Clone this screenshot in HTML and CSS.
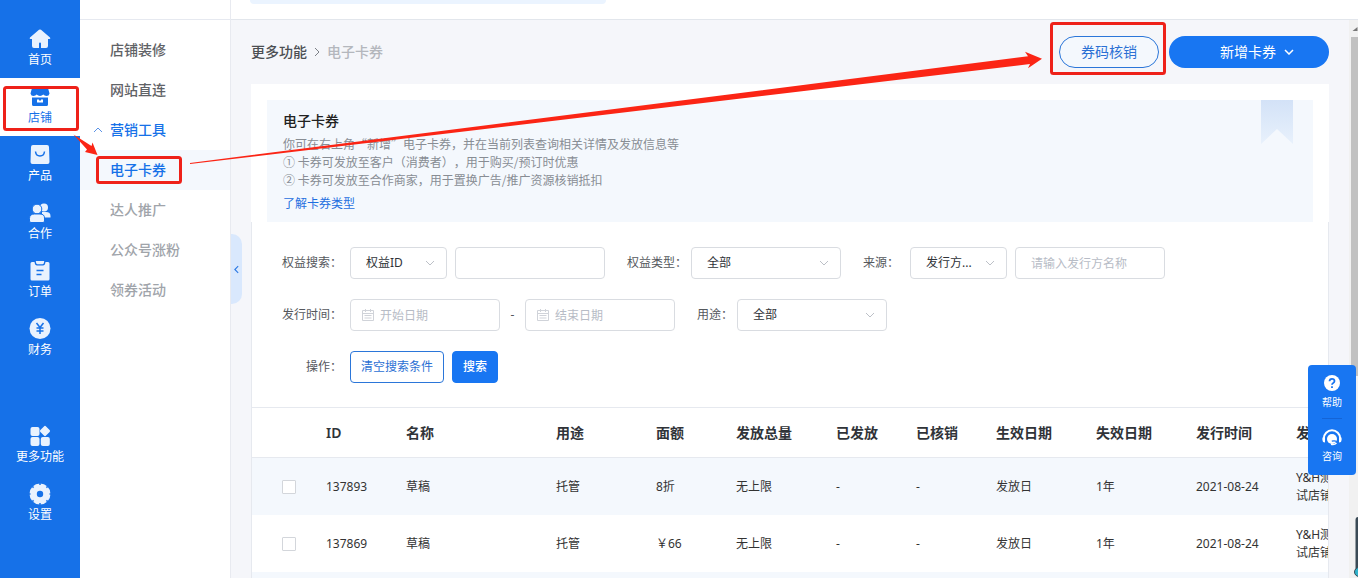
FILE: index.html
```html
<!DOCTYPE html>
<html lang="zh-CN">
<head>
<meta charset="utf-8">
<title>电子卡券</title>
<link rel="stylesheet" href="styles.css">
</head>
<body>
<div class="app">
  <nav class="rail">
    <a class="rail-item" href="#">
      <svg class="rail-icon" viewBox="0 0 22 22"><path d="M10 1.8Q11 1 12 1.8L21 9.6Q22 11 20.5 11H19V18Q19 20 17 20H12V15.5Q12 14.5 11 14.5T10 15.5V20H5Q3 20 3 18V11H1.5Q0 11 1 9.6Z"/></svg>
      <span>首页</span>
    </a>
    <a class="rail-item active" href="#">
      <svg class="rail-icon" viewBox="0 0 22 22"><path d="M3 2H19L20.500 7.500Q20 10 17.500 10 15.500 10 14.300 8.600 13 10 11 10T7.700 8.600Q6.500 10 4.500 10 2 10 1.500 7.500Z"/><path fill-rule="evenodd" d="M3 11.500H19V18.500Q19 20 17.500 20H4.500Q3 20 3 18.500ZM8 13.500V16.500H14V13.500Z"/><path d="M10 13H12V14.500H10Z"/></svg>
      <span>店铺</span>
    </a>
    <a class="rail-item" href="#">
      <svg class="rail-icon" viewBox="0 0 22 22"><path d="M4 1H18Q20 1 20 3L20.500 18Q20.500 20 18.500 20H3.500Q1.500 20 1.500 18L2 3Q2 1 4 1Z"/><path class="cut" d="M6.500 7.500Q7 12 11 12T15.500 7.500"/></svg>
      <span>产品</span>
    </a>
    <a class="rail-item" href="#">
      <svg class="rail-icon" viewBox="0 0 22 22"><circle cx="15" cy="5.500" r="4"/><path d="M13 10H17Q21.500 10 21.500 14V15.500H13Z"/><g class="front"><circle cx="8" cy="7" r="4.800"/><path d="M5.500 12H11Q15.500 12 15.500 16V19Q15.500 20.500 14 20.500H2Q.5 20.500 .5 19V16.500Q.5 12 5.500 12Z"/></g></svg>
      <span>合作</span>
    </a>
    <a class="rail-item" href="#">
      <svg class="rail-icon" viewBox="0 0 22 22"><path d="M3 2H5.500Q6 5.500 8 5.500H14Q16 5.500 16.500 2H19Q20.500 2 20.500 3.500V19Q20.500 20.500 19 20.500H3Q1.500 20.500 1.500 19V3.500Q1.500 2 3 2Z"/><path d="M6.800 1H15.200Q15 4.300 13.500 4.300H8.500Q7 4.300 6.800 1Z"/><path class="cut" d="M7.500 10.500H14.500M7.500 14.500H12.500"/></svg>
      <span>订单</span>
    </a>
    <a class="rail-item" href="#">
      <svg class="rail-icon" viewBox="0 0 22 22"><circle cx="11" cy="10.500" r="10.500"/><path class="cut" d="M7.500 5 11 9.500 14.500 5M11 9.500V16M7.500 10H14.500M7.500 13H14.500"/></svg>
      <span>财务</span>
    </a>
    <a class="rail-item secondary" href="#">
      <svg class="rail-icon" viewBox="0 0 22 22"><rect x="1.500" y="2" width="9" height="9" rx="2"/><rect x="1.500" y="12" width="9" height="9" rx="2"/><rect x="11.800" y="12" width="9" height="9" rx="2"/><rect x="12" y="2" width="8" height="8" rx="1.500" transform="rotate(45 16 6)"/></svg>
      <span>更多功能</span>
    </a>
    <a class="rail-item" href="#">
      <svg class="rail-icon" viewBox="0 0 22 22"><circle cx="11" cy="11" r="10.500"/><path class="cut" d="M11 0V2M11 20V22M0 11H1.500M20.500 11H22M3.200 3.200 4.600 4.600M17.400 17.400 18.800 18.800M3.200 18.800 4.600 17.400M17.400 4.600 18.800 3.200"/><circle class="hole" cx="11" cy="11" r="3.200"/></svg>
      <span>设置</span>
    </a>
  </nav>

  <aside class="submenu">
    <div class="submenu-top"></div>
    <a href="#">店铺装修</a>
    <a href="#">网站直连</a>
    <a class="open" href="#"><svg class="caret" viewBox="0 0 10 6"><path d="M1 5 5 1 9 5"/></svg>营销工具</a>
    <a class="current" href="#">电子卡券</a>
    <a class="sub" href="#">达人推广</a>
    <a class="sub" href="#">公众号涨粉</a>
    <a class="sub" href="#">领券活动</a>
  </aside>

  <div class="workspace">
    <button class="collapse" type="button" aria-label="收起菜单"><svg viewBox="0 0 6 10"><path d="M5 1 1 5 5 9"/></svg></button>
    <header class="topbar"><div class="topbar-search"></div></header>
    <div class="viewport">
      <main class="content">
        <div class="toolbar">
          <div class="crumbs">
            <a href="#">更多功能</a>
            <svg viewBox="0 0 6 10"><path d="M1 1 5 5 1 9"/></svg>
            <span>电子卡券</span>
          </div>
          <div class="actions">
            <button class="pill outline" type="button">券码核销</button>
            <button class="pill solid" type="button">新增卡券<svg viewBox="0 0 10 6"><path d="M1 1 5 5 9 1"/></svg></button>
          </div>
        </div>

        <section class="intro">
          <div class="intro-box">
            <h1>电子卡券</h1>
            <p>你可在右上角“新增”电子卡券，并在当前列表查询相关详情及发放信息等<br>① 卡券可发放至客户（消费者），用于购买/预订时优惠<br>② 卡券可发放至合作商家，用于置换广告/推广资源核销抵扣</p>
            <a href="#">了解卡券类型</a>
            <svg class="ribbon" viewBox="0 0 32 44"><defs><linearGradient id="fade" x2="0" y2="1"><stop stop-color="#d3e2f7"/><stop offset="1" stop-color="#e8f1fc"/></linearGradient></defs><path fill="url(#fade)" d="M0 0H32V44L16 29 0 44Z"/></svg>
          </div>
        </section>

        <section class="panel">
          <form class="filters">
            <div class="filter-row">
              <label class="lead" for="key">权益搜索：</label>
              <div class="group">
                <div class="pick short"><select id="key"><option>权益ID</option></select><svg viewBox="0 0 10 6"><path d="M1 1 5 5 9 1"/></svg></div>
                <input class="box" type="text" aria-label="权益搜索内容">
              </div>
              <div class="field">
                <label for="type">权益类型：</label>
                <div class="pick"><select id="type"><option>全部</option></select><svg viewBox="0 0 10 6"><path d="M1 1 5 5 9 1"/></svg></div>
              </div>
              <div class="field wide">
                <label for="source">来源：</label>
                <div class="group">
                  <div class="pick short"><select id="source"><option>发行方...</option></select><svg viewBox="0 0 10 6"><path d="M1 1 5 5 9 1"/></svg></div>
                  <input class="box" type="text" placeholder="请输入发行方名称" aria-label="发行方名称">
                </div>
              </div>
            </div>
            <div class="filter-row">
              <label class="lead" for="from">发行时间：</label>
              <div class="range">
                <div class="date"><svg viewBox="0 0 12 12"><path d="M.5 1.500H11.500V11.500H.5ZM.5 4.500H11.500M3.500 0V3M8.500 0V3M2.500 6.500H9.500M2.500 9H9.500"/></svg><input class="box" id="from" type="text" placeholder="开始日期"></div>
                <span>-</span>
                <div class="date"><svg viewBox="0 0 12 12"><path d="M.5 1.500H11.500V11.500H.5ZM.5 4.500H11.500M3.500 0V3M8.500 0V3M2.500 6.500H9.500M2.500 9H9.500"/></svg><input class="box" type="text" placeholder="结束日期" aria-label="结束日期"></div>
              </div>
              <div class="field">
                <label for="use">用途：</label>
                <div class="pick"><select id="use"><option>全部</option></select><svg viewBox="0 0 10 6"><path d="M1 1 5 5 9 1"/></svg></div>
              </div>
            </div>
            <div class="filter-row">
              <span class="lead">操作：</span>
              <div class="group">
                <button class="btn" type="reset">清空搜索条件</button>
                <button class="btn primary" type="button">搜索</button>
              </div>
            </div>
          </form>

          <table class="list">
            <colgroup><col class="w64"><col class="w80"><col class="w150"><col class="w100"><col class="w80"><col class="w100"><col class="w80"><col class="w80"><col class="w100"><col class="w100"><col class="w100"><col></colgroup>
            <thead>
              <tr><th></th><th>ID</th><th>名称</th><th>用途</th><th>面额</th><th>发放总量</th><th>已发放</th><th>已核销</th><th>生效日期</th><th>失效日期</th><th>发行时间</th><th>发行方</th></tr>
            </thead>
            <tbody>
              <tr><td class="tick"><input type="checkbox" aria-label="选择 137893"></td><td>137893</td><td>草稿</td><td>托管</td><td>8折</td><td>无上限</td><td>-</td><td>-</td><td>发放日</td><td>1年</td><td>2021-08-24</td><td class="issuer">Y&amp;H测试店铺</td></tr>
              <tr><td class="tick"><input type="checkbox" aria-label="选择 137869"></td><td>137869</td><td>草稿</td><td>托管</td><td>￥66</td><td>无上限</td><td>-</td><td>-</td><td>发放日</td><td>1年</td><td>2021-08-24</td><td class="issuer">Y&amp;H测试店铺</td></tr>
              <tr><td colspan="12"></td></tr>
            </tbody>
          </table>
        </section>
      </main>
      <div class="scrollbar"><svg viewBox="0 0 8 17"><path d="M8 7V11H3Z"/></svg><div class="thumb"></div></div>
    </div>
  </div>
</div>

<div class="float">
  <a href="#"><svg viewBox="0 0 20 18"><circle cx="10" cy="9" r="8" fill="#fff"/><path d="M7.500 7.300Q7.600 4.800 10 4.800T12.500 7Q12.500 8.200 11.200 9 10 9.700 10 10.800M10 12.300V14" fill="none" stroke="#1673f0" stroke-width="1.800"/></svg>帮助</a>
  <a href="#"><svg viewBox="0 0 20 18"><path d="M1.800 12V10.500A8.200 8.200 0 0 1 18.200 10.500V12" fill="none" stroke="#fff" stroke-width="2"/><path d="M.5 9.500H3V14.500Q.5 14.500 .5 12ZM19.500 9.500H17V14.500Q19.500 14.500 19.500 12Z" fill="#fff"/><circle cx="10" cy="11" r="5" fill="#fff"/><path d="M9.800 13.200Q12.800 12.500 14.800 13.500" fill="none" stroke="#1673f0" stroke-width="1.200"/><path d="M9 16.200Q12.500 17 14.500 15" fill="none" stroke="#fff" stroke-width="1.500"/></svg>咨询</a>
</div>
<svg class="dock" viewBox="0 0 4 61"><path d="M4 0Q1.500 0 1.500 3V53H4Z" fill="#3a4a55"/><circle cx="5" cy="55" r="4.500" fill="#2fb3cc" stroke="#3a4a55"/></svg>

<svg class="marks" width="1358" height="578" viewBox="0 0 1358 578">
  <g fill="none" stroke="#ee2119" stroke-width="3">
    <rect x="4.500" y="87.500" width="73" height="42" rx="2"/>
    <rect x="97.500" y="157.500" width="83" height="25" rx="2"/>
    <rect x="1051.500" y="23.500" width="113" height="50" rx="2"/>
  </g>
  <g fill="#fb2515">
    <path d="M73.500 134.500 91.500 146 92.500 142.500 97.500 155 85 152 87 149.500Z"/>
    <path d="M190 163 1028 56.300 1025 51.700 1042 58.700 1028 68.300 1030 64 190 164Z"/>
  </g>
</svg>
</body>
</html>
```

FILE: styles.css
```css
* { box-sizing: border-box; }

body {
  margin: 0;
  overflow: hidden;
  font: 12px/18px "Noto Sans", "Noto Sans CJK SC", sans-serif;
  color: #333;
  background: #f5f6fa;
  text-spacing-trim: space-all;
}

a { color: inherit; text-decoration: none; }
button, input, select { font: inherit; }
svg { display: block; flex: none; }

.app { display: flex; height: 100vh; }

/* primary navigation */
.rail {
  width: 80px;
  flex: none;
  padding-top: 20px;
  background: #1671e8;
  color: #fff;
}
.rail-item {
  display: flex;
  flex-direction: column;
  align-items: center;
  height: 58px;
  padding-top: 8px;
}
.rail-item.active { background: #fff; color: #1671e8; }
.rail-item.secondary { margin-top: 49px; }
.rail-item span { margin-top: 1px; }
.rail-icon { width: 22px; height: 22px; fill: #e9f2fe; }
.active .rail-icon { fill: #1671e8; }
.rail-icon .cut { fill: none; stroke: #1671e8; stroke-width: 1.5; }
.rail-icon .front { stroke: #1671e8; stroke-width: 1; }
.rail-icon .hole { fill: #1671e8; }

/* secondary navigation */
.submenu {
  width: 151px;
  flex: none;
  background: #fff;
  border-right: 1px solid #e8eaf0;
  font-size: 14px;
  font-weight: 500;
}
.submenu-top { height: 20px; margin-bottom: 10px; border-bottom: 1px solid #e6e9f0; }
.submenu a {
  display: flex;
  align-items: center;
  height: 40px;
  padding-left: 30px;
  color: #5f6266;
}
.submenu a.open { padding-left: 13px; gap: 7px; color: #1671e8; }
.submenu a.current { background: #f4f8fd; color: #1671e8; }
.submenu a.sub { color: #a0a4aa; }
.caret { width: 10px; height: 6px; fill: none; stroke: #5b93e6; }

/* workspace */
.workspace {
  position: relative;
  flex: 1;
  min-width: 0;
  display: flex;
  flex-direction: column;
}
.topbar {
  height: 20px;
  flex: none;
  padding-left: 19px;
  background: #fff;
  border-bottom: 1px solid #e2e6ec;
}
.topbar-search { width: 356px; height: 4px; background: #ebf4ff; border-radius: 0 0 4px 4px; }
.collapse {
  position: absolute;
  left: 0;
  top: 234px;
  width: 11px;
  height: 70px;
  padding: 0 3px;
  border: 0;
  border-radius: 0 10px 10px 0;
  background: #d9e8fd;
}
.collapse svg { width: 5px; height: 9px; fill: none; stroke: #2b78e4; stroke-width: 1.3; }
.viewport { flex: 1; min-height: 0; display: flex; }
.content { flex: 1; min-width: 0; padding: 16px 20px 0; overflow: hidden; }
.scrollbar { width: 9px; flex: none; background: #f1f1f1; }
.scrollbar svg { width: 9px; height: 17px; fill: #777; }
.thumb { height: 339px; margin-left: 2px; background: #c1c1c1; }

.toolbar { display: flex; justify-content: space-between; align-items: center; }
.crumbs {
  display: flex;
  align-items: center;
  gap: 7px;
  font-size: 14px;
  font-weight: 500;
  color: #4b4e52;
}
.crumbs svg { width: 6px; height: 10px; fill: none; stroke: #7d8187; }
.crumbs span { color: #b4b7bd; }
.actions { display: flex; gap: 10px; }
.pill {
  display: flex;
  align-items: center;
  justify-content: center;
  height: 32px;
  border-radius: 16px;
  font-size: 14px;
}
.pill.outline { width: 100px; padding: 0; border: 1px solid #2b76d9; background: #f4f8fd; color: #2b70d4; }
.pill.solid { width: 160px; padding: 0 0 0 16px; gap: 8px; border: 0; background: #1876f2; color: #fff; }
.pill svg { width: 10px; height: 6px; fill: none; stroke: #fff; stroke-width: 1.5; }

/* introduction */
.intro { margin-top: 16px; padding: 16px 16px 0; background: #fff; }
.intro-box {
  position: relative;
  padding: 11px 16px 10px;
  background: #f4f8fd;
  font-family: "Noto Sans CJK SC", sans-serif;
  color: #888d94;
}
.intro h1 { margin: 0 0 6px; font-size: 14px; line-height: 18px; font-weight: 500; color: #222; }
.intro p { margin: 0 0 5px; }
.intro a { display: block; line-height: 18px; color: #1f6fe0; }
.ribbon { position: absolute; top: 0; right: 20px; width: 32px; height: 44px; }

/* filters */
.panel { overflow: hidden; background: #fff; border: solid #e6e9ef; border-width: 0 1px; }
.filters {
  display: flex;
  flex-direction: column;
  gap: 20px;
  padding: 25px 30px 24px;
  color: #55585d;
}
.filter-row { display: flex; align-items: center; }
.lead { width: 60px; flex: none; margin-right: 8px; text-align: right; }
.group { display: flex; gap: 8px; }
.field { display: flex; align-items: center; gap: 4px; margin-left: 22px; }
.field.wide { gap: 11px; }
.range { display: flex; align-items: center; }
.range > span { width: 25px; text-align: center; }
.box, .pick select {
  width: 150px;
  height: 32px;
  padding: 0 15px;
  border: 1px solid #d9dce1;
  border-radius: 4px;
  background: #fff;
  color: #303338;
}
.box::placeholder { color: #b7bcc6; opacity: 1; }
.pick, .date { position: relative; }
.pick select { display: block; appearance: none; }
.pick.short select { width: 97px; }
.pick svg {
  position: absolute;
  right: 12px;
  top: 13px;
  width: 10px;
  height: 6px;
  fill: none;
  stroke: #bcc0c7;
  pointer-events: none;
}
.date .box { display: block; padding-left: 29px; }
.date svg {
  position: absolute;
  left: 12px;
  top: 10px;
  width: 12px;
  height: 12px;
  fill: none;
  stroke: #d0d3d9;
}
.btn {
  height: 32px;
  padding: 0 10px;
  border: 1px solid #2b76d9;
  border-radius: 4px;
  background: #fff;
  color: #2b70d4;
}
.btn.primary { border-color: #1876f2; background: #1876f2; color: #fff; font-weight: 500; }

/* table */
.list {
  width: 100%;
  min-width: 1094px;
  table-layout: fixed;
  border-collapse: separate;
  border-spacing: 0;
}
.w64 { width: 64px; }
.w80 { width: 80px; }
.w100 { width: 100px; }
.w150 { width: 150px; }
.list th, .list td { padding: 0 10px; text-align: left; white-space: nowrap; }
.list th {
  height: 51px;
  border: solid #e6e9ef;
  border-width: 1px 0;
  font-size: 14px;
  font-weight: 600;
  color: #303338;
}
.list td { height: 57px; }
.list tbody tr:nth-child(odd) { background: #f4f8fd; }
.list td.tick { padding-left: 30px; }
.list td.issuer { white-space: normal; }
.tick input {
  display: block;
  appearance: none;
  width: 14px;
  height: 14px;
  margin: 0;
  border: 1px solid #d3d6db;
  border-radius: 1px;
  background: #fff;
}

/* help widget */
.float {
  position: fixed;
  right: 2px;
  top: 365px;
  width: 48px;
  border-radius: 4px;
  background: #1876f2;
  color: #fff;
  font-size: 10px;
}
.float a {
  display: flex;
  flex-direction: column;
  align-items: center;
  height: 54px;
  padding-top: 9px;
  line-height: 18px;
  gap: 1px;
}
.float a + a { height: 56px; }
.float a + a::before { content: ""; width: 20px; height: 1px; margin: -10px 0 8px; background: #1464d6; }
.float svg { width: 20px; height: 18px; }
.dock { position: fixed; right: 0; bottom: 0; width: 4px; height: 61px; }

/* callouts */
.marks { position: absolute; left: 0; top: 0; pointer-events: none; }
```
